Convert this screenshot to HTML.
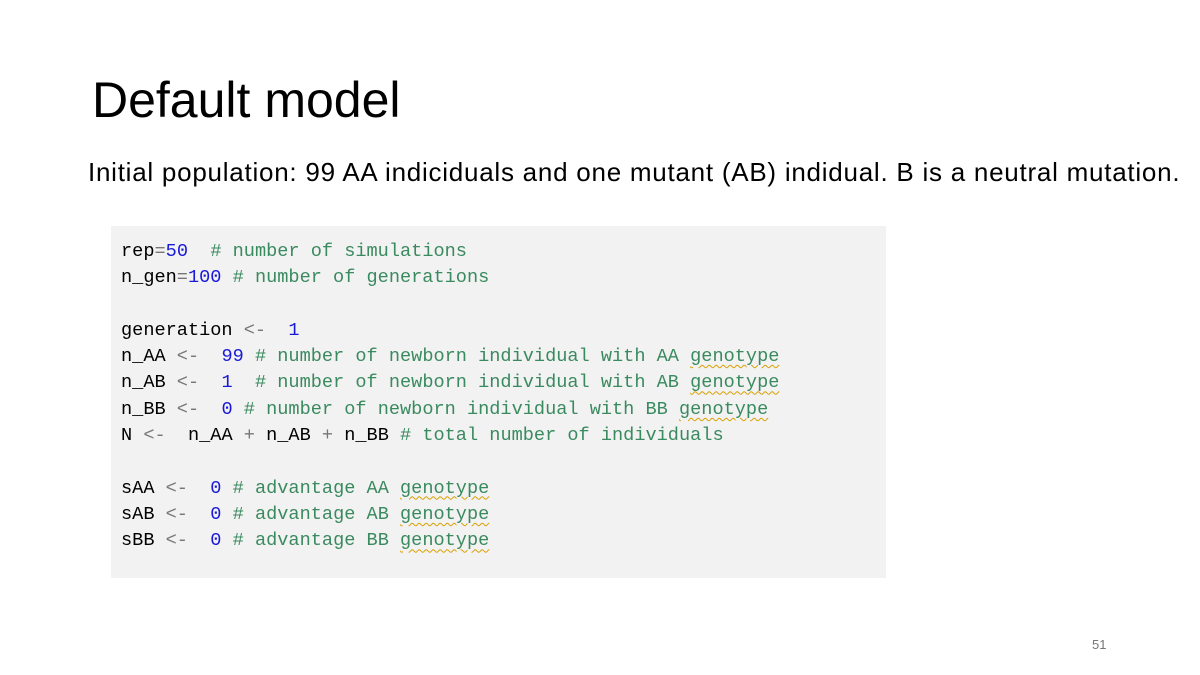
<!DOCTYPE html>
<html><head><style>
body{margin:0;width:1200px;height:675px;background:#fff;position:relative;overflow:hidden;font-family:"Liberation Sans",sans-serif}
.t{position:absolute;left:92px;top:71px;font-size:50px;color:#000;white-space:nowrap}
.s{position:absolute;left:88px;top:157px;font-size:26px;color:#000;white-space:nowrap;letter-spacing:0.75px}
.box{position:absolute;left:111px;top:226px;width:775px;height:352px;background:#f2f2f2}
pre{position:absolute;left:121px;top:239px;margin:0;font-family:"Liberation Mono",monospace;font-size:18.6px;line-height:26.3px;color:#000}
.n{color:#1a1ad6}.c{color:#3a8a5f}.o{color:#777}
.w{text-decoration:underline wavy #d8a000;text-underline-offset:3px;text-decoration-thickness:1px}
.p{position:absolute;left:1092px;top:637px;font-size:13px;color:#777}
</style></head><body>
<div class="t">Default model</div>
<div class="s">Initial population: 99 AA indiciduals and one mutant (AB) indidual. B is a neutral mutation.</div>
<div class="box"></div>
<pre>rep<span class="o">=</span><span class="n">50</span>  <span class="c"># number of simulations</span>
n_gen<span class="o">=</span><span class="n">100</span> <span class="c"># number of generations</span>

generation <span class="o">&lt;-</span>  <span class="n">1</span>
n_AA <span class="o">&lt;-</span>  <span class="n">99</span> <span class="c"># number of newborn individual with AA <span class="w">genotype</span></span>
n_AB <span class="o">&lt;-</span>  <span class="n">1</span>  <span class="c"># number of newborn individual with AB <span class="w">genotype</span></span>
n_BB <span class="o">&lt;-</span>  <span class="n">0</span> <span class="c"># number of newborn individual with BB <span class="w">genotype</span></span>
N <span class="o">&lt;-</span>  n_AA <span class="o">+</span> n_AB <span class="o">+</span> n_BB <span class="c"># total number of individuals</span>

sAA <span class="o">&lt;-</span>  <span class="n">0</span> <span class="c"># advantage AA <span class="w">genotype</span></span>
sAB <span class="o">&lt;-</span>  <span class="n">0</span> <span class="c"># advantage AB <span class="w">genotype</span></span>
sBB <span class="o">&lt;-</span>  <span class="n">0</span> <span class="c"># advantage BB <span class="w">genotype</span></span></pre>
<div class="p">51</div>
</body></html>
